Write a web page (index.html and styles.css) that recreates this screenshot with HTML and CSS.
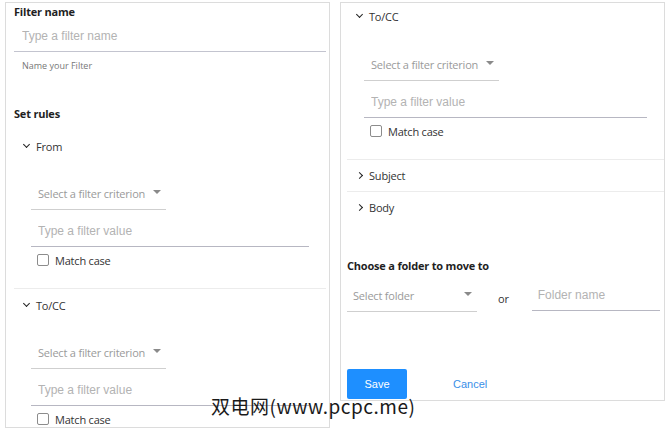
FILE: index.html
```html
<!DOCTYPE html>
<html lang="en">
<head>
    <meta charset="UTF-8">
    <meta name="viewport" content="width=device-width, initial-scale=1.0">
    <title>Create filter</title>
    <link rel="stylesheet" href="styles.css">
</head>
<body>
    <div class="filter-page">
        <div class="panel panel-left">
            <div class="field-title">Filter name</div>
            <input type="text" class="name-input" placeholder="Type a filter name">
            <div class="helper">Name your Filter</div>

            <div class="rules-title">Set rules</div>

            <div class="rule rule-top">
                <div class="rule-head"><span class="chev down"></span>From</div>
                <div class="select"><span>Select a filter criterion</span><span class="caret"></span></div>
                <input type="text" class="value-input" placeholder="Type a filter value">
                <label class="check"><span class="box"></span>Match case</label>
            </div>

            <div class="rule last">
                <div class="rule-head"><span class="chev down"></span>To/CC</div>
                <div class="select"><span>Select a filter criterion</span><span class="caret"></span></div>
                <input type="text" class="value-input" placeholder="Type a filter value">
                <label class="check"><span class="box"></span>Match case</label>
            </div>
        </div>

        <div class="panel panel-right">
            <div class="rule first">
                <div class="rule-head"><span class="chev down"></span>To/CC</div>
                <div class="select"><span>Select a filter criterion</span><span class="caret"></span></div>
                <input type="text" class="value-input" placeholder="Type a filter value">
                <label class="check"><span class="box"></span>Match case</label>
            </div>

            <div class="rule collapsed">
                <div class="rule-head"><span class="chev right"></span>Subject</div>
            </div>
            <div class="rule collapsed last">
                <div class="rule-head"><span class="chev right"></span>Body</div>
            </div>

            <div class="folder-title">Choose a folder to move to</div>
            <div class="folder-row">
                <div class="select folder-select"><span>Select folder</span><span class="caret"></span></div>
                <span class="or">or</span>
                <input type="text" class="folder-input" placeholder="Folder name">
            </div>

            <div class="actions">
                <button class="btn-save">Save</button>
                <button class="btn-cancel">Cancel</button>
            </div>
        </div>
    </div>

    <div class="watermark">双电网(www.pcpc.me)</div>
</body>
</html>
```

FILE: styles.css
```css
body {
    margin: 0;
    background: #fff;
    font-family: "Open Sans", "Noto Sans", sans-serif;
    letter-spacing: -0.2px;
    color: #333;
    position: relative;
    width: 670px;
    height: 430px;
    overflow: hidden;
}

.filter-page {
    display: flex;
    align-items: flex-start;
    padding: 2px 0 0 5px;
    gap: 10px;
}

.panel {
    border: 1px solid #dcdcdc;
    box-sizing: border-box;
    width: 325px;
}

.panel-left {
    height: 426px;
    padding: 0 3px 0 8px;
}

.panel-right {
    height: 399px;
    padding: 0 0 0 6px;
}

.field-title,
.rules-title,
.folder-title {
    font-weight: bold;
    font-size: 11px;
    color: #1f1f1f;
    line-height: 16px;
}

.field-title {
    padding-top: 1px;
}

input {
    display: block;
    border: none;
    outline: none;
    background: transparent;
    font-family: "Liberation Sans", Arial, sans-serif;
    font-size: 12px;
    letter-spacing: 0;
    color: #333;
    box-sizing: border-box;
    height: 32px;
    padding: 0 8px;
}

input::placeholder {
    color: #b3b3b3;
}

.name-input {
    width: 100%;
    border-bottom: 1px solid #c3c4cf;
}

.helper {
    font-size: 9px;
    letter-spacing: 0;
    color: #777;
    padding: 7px 0 0 8px;
    line-height: 14px;
}

.rules-title {
    margin-top: 33px;
}

.rule {
    border-bottom: 1px solid #ececec;
    padding-bottom: 18px;
}

.rule.last {
    border-bottom: none;
}

.rule.collapsed {
    padding-bottom: 0;
}

.rule-head {
    display: flex;
    align-items: center;
    height: 32px;
    font-size: 11px;
    color: #333;
    padding-left: 9px;
}

.rule-top .rule-head {
    margin-top: 8px;
}

.rule.first .rule-head {
    height: 27px;
}

.rule.first .select {
    margin-top: 19px;
}

.chev {
    box-sizing: border-box;
    border-right: 1.5px solid #222;
    border-bottom: 1.5px solid #222;
}

.chev.down {
    width: 5px;
    height: 5px;
    margin: 0 7px 0 1px;
    transform: translateY(-2px) rotate(45deg);
}

.chev.right {
    width: 5px;
    height: 5px;
    margin: 0 7px 0 1px;
    transform: rotate(-45deg);
}

.select {
    display: flex;
    align-items: center;
    justify-content: space-between;
    width: 135px;
    height: 32px;
    box-sizing: border-box;
    margin: 16px 0 0 17px;
    padding: 0 5px 0 7px;
    border-bottom: 1px solid #cfcfcf;
    font-size: 11px;
    color: #9a9a9a;
}

.caret {
    width: 0;
    height: 0;
    border-left: 4px solid transparent;
    border-right: 4px solid transparent;
    border-top: 4px solid #8a8a8a;
    margin-top: -3px;
}

.value-input {
    width: calc(100% - 34px);
    margin: 5px 17px 0 17px;
    padding-left: 7px;
    border-bottom: 1px solid #b7b7c2;
}

.check {
    display: flex;
    align-items: center;
    height: 20px;
    margin-left: 23px;
    margin-top: 3px;
    font-size: 11px;
    color: #333;
}

.box {
    width: 12px;
    height: 12px;
    box-sizing: border-box;
    border: 1px solid #8c8c8c;
    border-radius: 2px;
    margin-right: 6px;
}

.collapsed .rule-head {
    height: 31px;
}

.folder-title {
    margin-top: 35px;
}

.folder-row {
    display: flex;
    align-items: flex-start;
    margin-top: 6px;
}

.folder-select {
    width: 130px;
    margin: 0;
    padding: 0 5px 0 6px;
}

.or {
    font-size: 11px;
    color: #333;
    margin: 12px 0 0 21px;
    line-height: 14px;
}

.folder-input {
    width: 128px;
    margin: -1px 0 0 23px;
    padding-left: 6px;
    border-bottom: 1px solid #b7b7c2;
}

.actions {
    display: flex;
    align-items: center;
    margin-top: 57px;
}

button {
    font-family: "Liberation Sans", Arial, sans-serif;
    font-size: 11px;
    border: none;
    cursor: pointer;
}

.btn-save {
    width: 60px;
    height: 30px;
    background: #1e8fff;
    color: #fff;
    border-radius: 2px;
}

.btn-cancel {
    background: transparent;
    color: #3a8fe8;
    margin-left: 40px;
    padding: 0 6px;
}

.watermark {
    position: absolute;
    left: 211px;
    top: 392px;
    font-family: "Noto Sans CJK SC", sans-serif;
    font-size: 19px;
    color: #1a1a1a;
    letter-spacing: 0.5px;
}
```
